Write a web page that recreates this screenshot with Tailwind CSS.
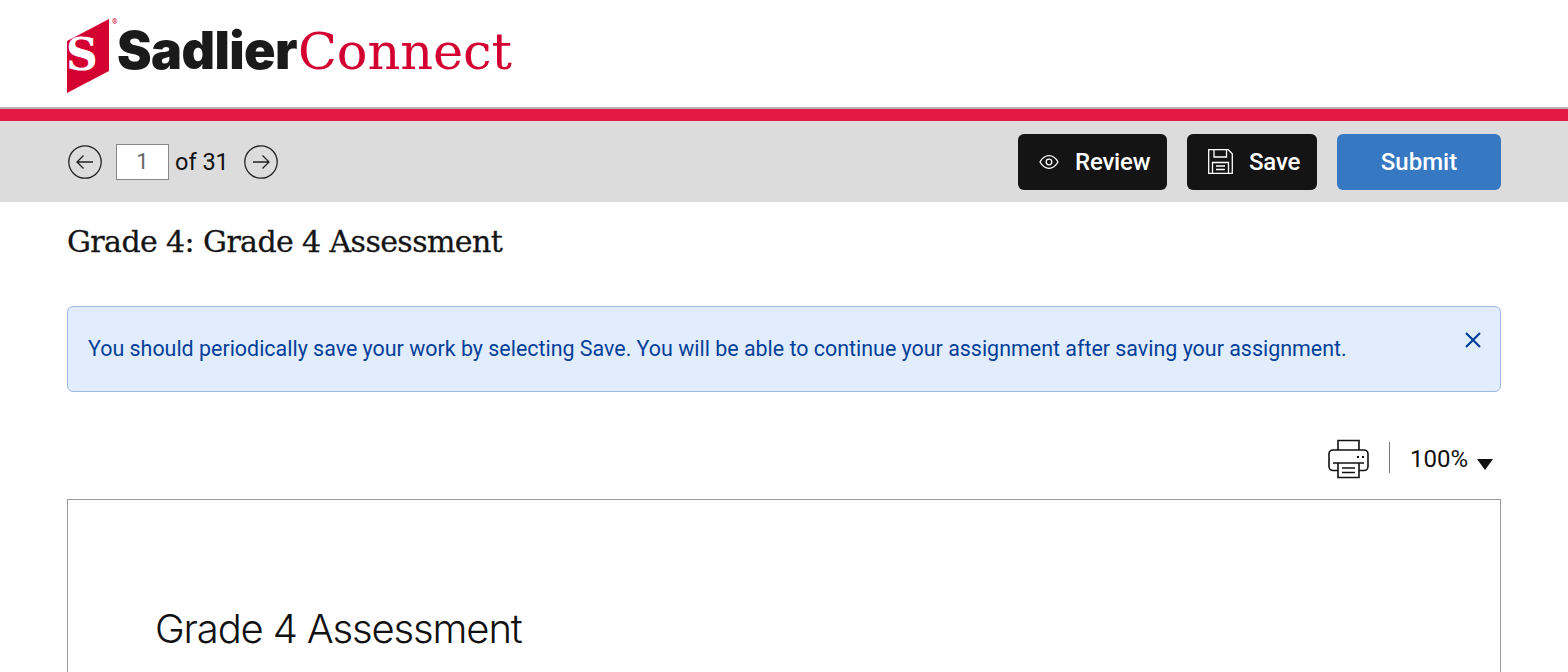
<!DOCTYPE html>
<html lang="en">

<head>
    <meta charset="UTF-8">
    <meta name="viewport" content="width=device-width, initial-scale=1.0">
    <title>Sadlier Connect</title>
    <script src="https://cdn.jsdelivr.net/npm/@tailwindcss/browser@4"></script>
</head>

<body class="m-0 p-0 h-[672px] overflow-hidden bg-white text-[#111] font-['Roboto',sans-serif]">

    <!-- logo -->
    <header class="h-[107px] px-[67px] flex items-start">
        <div class="flex items-start">
            <div class="relative w-[43px] h-[74px] mt-[19px] shrink-0 overflow-hidden">
                <svg class="absolute inset-0" width="43" height="74" viewBox="0 0 43 74">
                    <polygon points="0,22 0,74 42,52 42,0" fill="#d50032" />
                </svg>
                <span class="absolute left-[-1px] top-[11px] text-[44px] leading-[50px] font-bold text-white font-['DejaVu_Serif',serif]">S</span>
            </div>
            <span class="mt-[19px] ml-[2px] w-[6px] text-[7px] leading-[7px] text-[#d50032]">®</span>
            <div class="ml-[-1px] mt-[23px] flex items-baseline leading-[56px]">
                <span class="text-[52px] font-black tracking-[-0.6px] text-[#1a1a1a] font-['Inter',sans-serif]">Sadlier</span>
                <span class="ml-[1px] text-[51px] tracking-[-0.1px] text-[#d50032] font-['DejaVu_Serif',serif]">Connect</span>
            </div>
        </div>
    </header>
    <div class="h-[14px] bg-[#e31a44] border-t-2 border-[#b3b3b3]"></div>

    <!-- toolbar -->
    <div class="h-[81px] px-[67px] bg-[#dcdcdc] flex items-center justify-between">
        <div class="flex items-center text-[23.5px]">
            <svg class="ml-px" width="34" height="34" viewBox="0 0 34 34" fill="none" stroke="#222" stroke-width="1.3">
                <circle cx="17" cy="17" r="16.2" />
                <path d="M25 17H9M15.500 10.500L9 17l6.500 6.500" />
            </svg>
            <input type="text" value="1" class="ml-[14px] w-[53px] h-[36px] bg-white border border-[#888] text-center text-[22px] text-[#666] outline-none">
            <span class="ml-[6px] pt-[3px] text-[#111]">of 31</span>
            <svg class="ml-[15px]" width="34" height="34" viewBox="0 0 34 34" fill="none" stroke="#222" stroke-width="1.3">
                <circle cx="17" cy="17" r="16.2" />
                <path d="M9 17h16M18.500 10.500L25 17l-6.500 6.500" />
            </svg>
        </div>
        <div class="flex items-center gap-[20px] text-[24px] font-medium text-white">
            <button class="w-[149px] h-[56px] rounded-[6px] bg-[#141414] flex items-center pl-[21px]">
                <svg width="20" height="16" viewBox="0 0 20 16" fill="none" stroke="#fff" stroke-width="1.3">
                    <path d="M1 8c2.400-4.200 5.400-6.300 9-6.300s6.600 2.100 9 6.300c-2.400 4.200-5.400 6.300-9 6.300S3.400 12.200 1 8z" />
                    <circle cx="10" cy="8" r="2.800" />
                </svg>
                <span class="ml-[16px] tracking-[-0.2px]">Review</span>
            </button>
            <button class="w-[130px] h-[56px] rounded-[6px] bg-[#141414] flex items-center pl-[21px]">
                <svg width="25" height="25" viewBox="0 0 25 25" fill="none" stroke="#fff" stroke-width="1.300">
                    <path d="M.7.700h19.600l4 4v19.600H.7z" />
                    <path d="M6 .700v7.300h12.500V.700M4.500 24.300V13.500h16v10.800M8 17h9M8 20.500h9" />
                </svg>
                <span class="ml-[16px] tracking-[-0.2px]">Save</span>
            </button>
            <button class="w-[164px] h-[56px] rounded-[6px] bg-[#3678c2] flex items-center justify-center">Submit</button>
        </div>
    </div>

    <main class="px-[67px]">
        <h1 class="mt-[20px] text-[30px] leading-[40px] tracking-[-0.6px] text-[#151515] [-webkit-text-stroke:0.3px_#151515] font-['DejaVu_Serif',serif]">Grade 4: Grade 4 Assessment</h1>

        <!-- alert -->
        <div class="mt-[44px] h-[86px] pl-[20px] pr-[19px] rounded-[6px] border border-[#9db9e3] bg-[#e1edfc] text-[#043f9a] flex justify-between">
            <p class="mt-[28px] text-[21.43px] leading-[28px]">You should periodically save your work by selecting Save. You will be able to continue your assignment after saving your assignment.</p>
            <svg class="mt-[25px]" width="16" height="16" viewBox="0 0 16 16" fill="none" stroke="#043f9a" stroke-width="2.200">
                <path d="M1 1l14 14M15 1L1 15" />
            </svg>
        </div>

        <!-- print and zoom -->
        <div class="mt-[47px] h-[40px] pr-[8px] flex items-center justify-end">
            <svg width="41" height="40" viewBox="0 0 41 40" fill="none" stroke="#111" stroke-width="1.600">
                <path d="M10 11V1.500h21V11" />
                <path d="M10 31.500H5a4 4 0 0 1-4-4V15a4 4 0 0 1 4-4h31a4 4 0 0 1 4 4v12.500a4 4 0 0 1-4 4h-5" />
                <path d="M10 24h21v14.500H10zM5 24h31M14 29h13M14 33.500h13" />
                <path d="M29 18h2M34 18h2" stroke-width="2" />
            </svg>
            <div class="ml-[20px] mb-[3px] w-px h-[31px] bg-[#777]"></div>
            <span class="ml-[20px] text-[24px] leading-[32px] text-[#111]">100%</span>
            <div class="ml-[9px] mt-[10px] w-0 h-0 border-x-[8.500px] border-x-transparent border-t-[11px] border-t-[#111]"></div>
        </div>

        <!-- document -->
        <div class="mt-[20px] h-[173px] overflow-hidden border border-b-0 border-[#999] pl-[87px] pt-[103px]">
            <h2 class="text-[40px] leading-[52px] font-light tracking-[-1.15px] text-[#111] font-['Inter',sans-serif]">Grade 4 Assessment</h2>
        </div>
    </main>

</body>

</html>
